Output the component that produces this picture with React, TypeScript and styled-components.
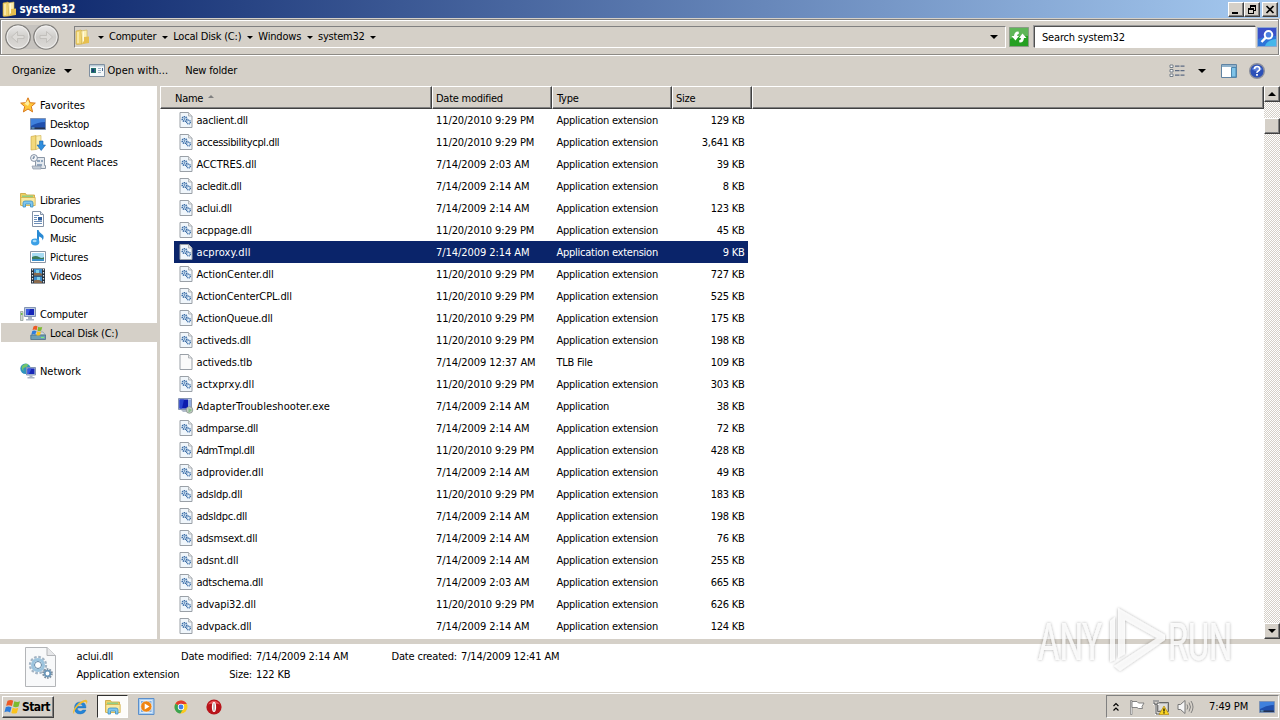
import React from "react";
import styled, { createGlobalStyle, css } from "styled-components";

const FACE = "#d5d0c8";
const UI = `"Tahoma", "DejaVu Sans Condensed", "DejaVu Sans", sans-serif`;

const Global = createGlobalStyle`
  * { box-sizing: border-box; }
  html, body { margin: 0; padding: 0; overflow: hidden; }
  body { font: 11px/16px ${UI}; letter-spacing: -0.25px; color: #000; background: ${FACE}; }
`;

const raised = css`
  background: ${FACE};
  border: 1px solid;
  border-color: #fff #404040 #404040 #fff;
  box-shadow: inset -1px -1px 0 #808080;
`;

const Screen = styled.div`
  position: relative;
  display: flex;
  flex-direction: column;
  width: 1280px;
  height: 720px;
  background: ${FACE};
  white-space: nowrap;
  cursor: default;
`;

const Text = styled.span<{ $track?: number; $drop?: number }>`
  padding-top: ${(p) => p.$drop ?? 0}px;
  letter-spacing: ${(p) => p.$track ?? -0.25}px;
`;

/* ---------- title bar ---------- */
const TitleBar = styled.header`
  display: flex;
  align-items: center;
  height: 18px;
  padding: 0 2px 0 2px;
  color: #fff;
  background: linear-gradient(90deg, #0a246a, #a6caf0);
`;
const Title = styled.h1`
  flex: 1;
  margin: 0 0 0 1.5px;
  font: bold 11.5px/18px ${UI};
  letter-spacing: -0.05px;
`;
const CaptionButtons = styled.div`
  display: flex;
`;
const CaptionButton = styled.button<{ $gap?: boolean }>`
  ${raised}
  display: grid;
  place-items: center;
  width: 16px;
  height: 15px;
  margin-left: ${(p) => (p.$gap ? 2 : 0)}px;
  padding: 0;
`;

/* ---------- address bar ---------- */
const NavBar = styled.div`
  display: flex;
  align-items: center;
  height: 36px;
  margin: 1px 1px 0 0;
  padding: 0 1px 0 4px;
  border: 1px solid #808080;
  border-bottom-color: #8d8a85;
  box-shadow: inset 1px 1px 0 #fff, 0 1px 0 #fff, 1px 0 0 #fff;
`;
const AddressBox = styled.div`
  display: flex;
  align-items: center;
  width: 932px;
  height: 22px;
  margin-left: 14px;
  border: 1px solid;
  border-color: #808080 #fff #fff #808080;
`;
const Crumb = styled.span`
  display: flex;
  align-items: center;
`;
const Arrow = styled.i<{ $m?: string; $s?: number }>`
  width: 0;
  height: 0;
  margin: ${(p) => p.$m ?? "0"};
  border: ${(p) => p.$s ?? 3}px solid transparent;
  border-top-color: #000;
  border-bottom: 0;
`;
const Spacer = styled.div`
  flex: 1;
`;
const SearchBox = styled.div`
  width: 222px;
  height: 22px;
  margin: 0 1px 0 5px;
  padding-left: 7px;
  line-height: 21px;
  letter-spacing: -0.18px;
  background: #fff;
  border: 1px solid;
  border-color: #505050 #e8e5df #fff #505050;
  box-shadow: -1px -1px 0 #999;
`;

/* ---------- command bar ---------- */
const CommandBar = styled.div`
  display: flex;
  align-items: center;
  height: 31px;
  padding: 0 15px 0 12px;
`;
const Command = styled.span<{ $left?: number; $gap?: number }>`
  display: flex;
  align-items: center;
  gap: ${(p) => p.$gap ?? 0}px;
  margin-left: ${(p) => p.$left ?? 0}px;
`;

/* ---------- body ---------- */
const Body = styled.main`
  display: flex;
  height: 553px;
`;
const Sidebar = styled.nav`
  width: 160px;
  padding-top: 9px;
  background: #fff;
  border-right: 3px solid ${FACE};
`;
const Group = styled.div`
  margin-bottom: 19px;
`;
const NavItem = styled.div<{ $root?: boolean; $on?: boolean }>`
  display: flex;
  align-items: center;
  gap: 4px;
  height: 19px;
  margin-left: 1px;
  padding-left: ${(p) => (p.$root ? 19 : 29)}px;
  background: ${(p) => (p.$on ? FACE : "none")};
`;
const Files = styled.section`
  flex: 1;
  background: #fff;
`;
const HeaderRow = styled.div`
  display: grid;
  grid-template-columns: 272px 120px 120px 80px 1fr;
  height: 23px;
`;
const HeaderCell = styled.div<{ $pad?: number }>`
  display: flex;
  align-items: center;
  padding-top: 2px;
  padding-left: ${(p) => p.$pad ?? 3}px;
  background: ${FACE};
  border: 1px solid;
  border-color: #fff #404040 #404040 #fff;
  box-shadow: inset -1px -1px 0 #808080;
`;
const SortArrow = styled.i`
  margin: -4px 0 0 5px;
  border: 3px solid transparent;
  border-top: 0;
  border-bottom-color: #808080;
`;
const FileRow = styled.div<{ $on?: boolean }>`
  display: grid;
  grid-template-columns: 262px 120.500px 112.500px 75.500px;
  align-items: center;
  width: 574px;
  height: 22px;
  margin-left: 14px;
  line-height: 16px;
  color: ${(p) => (p.$on ? "#fff" : "#000")};
  background: ${(p) => (p.$on ? "#0a246a" : "none")};
`;
const NameCell = styled.span`
  display: flex;
  align-items: center;
  gap: 2.500px;
  padding-left: 4px;
`;
const SizeCell = styled.span`
  padding-top: 2px;
  text-align: right;
`;
const ScrollBar = styled.div`
  display: flex;
  flex-direction: column;
  justify-content: space-between;
  width: 16px;
  background: repeating-conic-gradient(#d5d0c8 0 25%, #fff 0 50%) 0 0 / 2px 2px;
`;
const ScrollButton = styled.div<{ $flip?: boolean }>`
  ${raised}
  display: grid;
  place-items: center;
  height: 16px;
  ${Arrow} {
    transform: ${(p) => (p.$flip ? "rotate(180deg)" : "none")};
  }
`;
const ScrollThumb = styled.div`
  ${raised}
  height: 16px;
  margin-top: 16px;
`;

/* ---------- details pane ---------- */
const Details = styled.footer`
  display: flex;
  height: 53px;
  padding: 3px 0 0 25px;
  background: #fff;
  border-top: 5px solid ${FACE};
`;
const DetailGrid = styled.div`
  display: grid;
  grid-template-columns: 101px 74.500px 134.500px 70.500px auto;
  grid-auto-rows: 18px;
  margin-left: 20.500px;
  line-height: 19px;
  letter-spacing: -0.18px;
`;
const Right = styled.span`
  text-align: right;
`;
const Value = styled.span`
  padding-left: 4px;
  letter-spacing: -0.13px;
`;

/* ---------- taskbar ---------- */
const TaskBar = styled.div`
  display: flex;
  align-items: center;
  height: 28px;
  padding: 1px 1px 0 2px;
  background: ${FACE};
  box-shadow: inset 0 1px 0 ${FACE}, inset 0 2px 0 #fff;
`;
const StartButton = styled.button`
  ${raised}
  display: flex;
  align-items: center;
  gap: 1px;
  width: 52px;
  height: 22px;
  padding: 0 1px;
  color: #000;
  font: bold 12px/20px ${UI};
  letter-spacing: -0.6px;
`;
const TaskIcons = styled.div`
  display: flex;
  align-items: center;
  margin-left: 18px;
`;
const TaskSlot = styled.div<{ $w: number; $on?: boolean }>`
  display: grid;
  place-items: center;
  width: ${(p) => p.$w}px;
  height: 23px;
  ${(p) =>
    p.$on &&
    css`
      background: #fdfcfa;
      border: 1px solid;
      border-color: #303030 #fff #fff #303030;
    `}
`;
const Tray = styled.div`
  display: flex;
  align-items: center;
  width: 173px;
  height: 23px;
  padding: 0 3px 0 6px;
  border: 1px solid;
  border-color: #808080 #fff #fff #808080;
`;
const Clock = styled.time`
  margin: 0 11px 0 15px;
  padding-top: 1px;
  letter-spacing: -0.1px;
`;
const Watermark = styled.svg`
  position: absolute;
  left: 1028px;
  top: 600px;
  overflow: visible;
`;

/* ---------- icons ---------- */
type IconProps = { size?: number; w?: number; children: React.ReactNode; box?: string };
const Icon = ({ size = 16, w, children, box = "0 0 16 16" }: IconProps) => (
  <svg width={w ?? size} height={size} viewBox={box}>
    {children}
  </svg>
);

const Folder = () => (
  <Icon>
    <path d="M1 2l5-1 1 1v13l-5 .5L1 15z" fill="#f0d470" stroke="#c9a53c" strokeWidth=".6" />
    <path d="M6 2l6-1v12l-5 2z" fill="#fbeeb0" stroke="#cfae49" strokeWidth=".6" />
    <path d="M9 8l5-.5v6.500L7.500 15z" fill="#e6bf4e" />
    <path d="M3 3v11M8.500 2.500v10" stroke="#fff9dc" />
  </Icon>
);
const Star = () => (
  <Icon>
    <path d="M8 .8l2.100 4.900 5.200.4-4 3.500 1.300 5.300L8 12l-4.600 2.900 1.300-5.300-4-3.500 5.200-.4z" fill="#ffc73a" stroke="#d9791c" strokeWidth="1" />
    <path d="M8 3l1.300 3.500L8 9 4.500 6.800z" fill="#ffee9e" />
  </Icon>
);
const Desktop = () => (
  <Icon>
    <path d="M.5 2.500h15v11H.5z" fill="#1f4fae" stroke="#7d92b5" />
    <path d="M1 3h14v3Q8 6 1 10z" fill="#3f80dd" />
    <path d="M1 11.500h14V13H1z" fill="#27334d" />
    <path d="M1.500 11.500h3v1h-3z" fill="#77c0f5" />
  </Icon>
);
const Downloads = () => (
  <Icon>
    <path d="M1 1.500L6 .5v14l-5 .5z" fill="#f3d97c" stroke="#c9a53c" strokeWidth=".6" />
    <path d="M6 1l5-.5v12l-5 2z" fill="#fbeeb0" stroke="#cfae49" strokeWidth=".6" />
    <path d="M9.500 6h3.500v4h2.500L11.200 15.500 7 10h2.500z" fill="#2f8ede" stroke="#1a62aa" strokeWidth=".6" />
  </Icon>
);
const Recent = () => (
  <Icon>
    <path d="M5.500 3.500h9v8h1v3h-10z" fill="#e3e8ee" stroke="#8b97a6" />
    <path d="M7 6h3v2H7zM11 6h2v2h-2zM7 10h5v2H7z" fill="#8fa5bd" />
    <path d="M2 12h9v3H3z" fill="#c3ccd6" stroke="#8b97a6" strokeWidth=".7" />
    <circle cx="4" cy="4" r="3.400" fill="#f4f7fa" stroke="#8491a3" />
    <path d="M4 2v2.200H2.500" fill="none" stroke="#4d6684" />
  </Icon>
);
const Library = ({ size = 16 }: { size?: number }) => (
  <Icon size={size}>
    <path d="M.5 1.500h5l1 1.500h8v10H.5z" fill="#efcf62" stroke="#c8a137" strokeWidth=".8" />
    <path d="M2 3.500h11v4H2z" fill="#8fcf86" />
    <path d="M.8 5.500h14.400v8H.8z" fill="#fae99f" stroke="#d2ae48" strokeWidth=".8" />
    <path d="M3 15v-4q0-2 2-2h6q2 0 2 2v4h-2.500v-3h-5v3z" fill="#7fc6ee" stroke="#3b8fc4" strokeWidth=".8" />
  </Icon>
);
const DocIcon = () => (
  <Icon>
    <path d="M2.500.5h8l3 3v12h-11z" fill="#fff" stroke="#8492a6" />
    <path d="M10.500.5v3h3" fill="#dfe6ef" stroke="#8492a6" />
    <path d="M4 4.500h5M4 6.500h3M4 8.500h3M4 10.500h8M4 12.500h8" stroke="#6e8fb8" />
    <path d="M8 6h4v3.500H8z" fill="#2f5f9e" />
  </Icon>
);
const Music = () => (
  <Icon>
    <path d="M7 0h1.500q.5 2.500 3.500 4.300t.5 6.200q.3-3-3.500-4V12H7z" fill="#2a8ad4" />
    <ellipse cx="5.200" cy="12" rx="4.200" ry="3.400" fill="#3ba0e6" />
    <ellipse cx="4.600" cy="11" rx="2" ry="1.200" fill="#a7dbf8" />
  </Icon>
);
const Pictures = () => (
  <Icon>
    <path d="M.5 2.500h15v11H.5z" fill="#fff" stroke="#8b97a6" />
    <path d="M2 4h12v8H2z" fill="#a8dcf3" />
    <path d="M2 8q4-2 7 0t5 0v2H2z" fill="#3d7d5a" />
    <path d="M2 10h12v2H2z" fill="#3a8fc9" />
  </Icon>
);
const Videos = () => (
  <Icon>
    <path d="M1 .5h14v15H1z" fill="#25303c" />
    <path d="M4 1h8v6.500H4zM4 8.500h8V15H4z" fill="#3e8fd0" />
    <path d="M4 5q4-2 8 1v1.500H4zM4 12.500q4-2 8 1V15H4z" fill="#8a6a4d" />
    <path d="M6 2h3v3H6zM7 9h3v3H7z" fill="#7fd0e8" />
    <path d="M2.500 1v14M13.500 1v14" stroke="#dde6ee" strokeWidth="1.200" strokeDasharray="1.500 1.500" />
  </Icon>
);
const Computer = () => (
  <Icon>
    <path d="M.5 5.500h2.500v9H.5z" fill="#cfd8cf" stroke="#8c9a94" strokeWidth=".7" />
    <path d="M1 7h1.500v2H1z" fill="#6cbf4a" />
    <path d="M4.500 1.500h11v9h-11z" fill="#b9c8e0" stroke="#8394b3" />
    <path d="M6 3h8v6H6z" fill="#1626b8" />
    <path d="M6 3h4L8 9H6z" fill="#3958e0" />
    <path d="M8 11h4v2h2v1.500H6V13h2z" fill="#a9b4c4" />
  </Icon>
);
const Flag = () => (
  <>
    <path d="M3.500 1.500q2.500-1.300 4 0L6.600 5.200q-2-1.200-4.100-.2z" fill="#ee5a24" />
    <path d="M8.300 1.800q2.200 1 4 0l-1 3.700q-2 1-3.900 0z" fill="#7cbb2e" />
    <path d="M2.300 5.900q2-1 4 .2l-1 3.600q-2-1.200-4-.1z" fill="#2e7ddb" />
    <path d="M7.100 6.400q2 1 4 0l-1 3.600q-2 1-3.900 0z" fill="#fbc31c" />
  </>
);
const Disk = () => (
  <Icon>
    <path d="M2 10l2-3h9l2.500 3z" fill="#d5dde4" stroke="#7f8b98" strokeWidth=".6" />
    <path d="M.8 10h14.700v4.500H.8z" fill="#6f9fb4" stroke="#496f86" strokeWidth=".8" />
    <path d="M11 12h3v1h-3z" fill="#7af27a" />
    <Flag />
  </Icon>
);
const Network = () => (
  <Icon>
    <circle cx="5.500" cy="5.800" r="5.200" fill="#2f93bd" />
    <path d="M2 3q3-3 6-2 0 3-3 3.500T4 8Q1 7 2 3z" fill="#74c66a" />
    <path d="M6.500 4.500h9v7.500h-9z" fill="#b9c8e0" stroke="#8394b3" />
    <path d="M7.500 5.500h7V11h-7z" fill="#1626b8" />
    <path d="M7.500 5.500h4L9 11H7.500z" fill="#3958e0" />
    <path d="M9.500 12.500h3V14h2v1.500h-7V14h2z" fill="#a9b4c4" />
  </Icon>
);
const Page = ({ gears }: { gears?: boolean }) => (
  <Icon>
    <path d="M2 .500h8.500l3.500 3.500v11.500H2z" fill={gears ? "#f0f6fb" : "#fafafa"} stroke="#9aa0a7" />
    <path d="M10.500.5V4H14" fill="#e4e4e4" stroke="#a4a9af" strokeWidth=".8" />
    {gears && (
      <>
        <circle cx="6.500" cy="7" r="2.300" fill="#dcebf8" stroke="#3a6ca6" strokeWidth="1.600" strokeDasharray="1.200 .6" />
        <circle cx="6.500" cy="7" r=".8" fill="#3a6ca6" />
        <circle cx="10.500" cy="10" r="1.900" fill="#dcebf8" stroke="#3a6ca6" strokeWidth="1.300" strokeDasharray="1 .5" />
      </>
    )}
  </Icon>
);
const ExeIcon = () => (
  <Icon>
    <path d="M.5.500h13v11H.5z" fill="#c3cde2" stroke="#8795b3" />
    <path d="M1.500 1.500h8.500v9H1.500z" fill="#0c1cae" />
    <path d="M1.500 1.500h4.500L4 10.500H1.500z" fill="#2743cf" />
    <path d="M10 2h3v8.500h-3z" fill="#8fa9dd" />
    <path d="M3 12h6v2H5z" fill="#b3bccb" />
    <circle cx="11.500" cy="12" r="3.300" fill="#c3cbc6" stroke="#8a978e" strokeWidth=".8" />
    <path d="M10.500 10l3.500 2-3.500 3z" fill="#8cc08c" />
  </Icon>
);
const FlagLogo = () => (
  <Icon size={17} box="1 0 12 11">
    <Flag />
  </Icon>
);

const BigDll = () => (
  <Icon w={31} size={40} box="0 0 31 40">
    <path d="M.5.500H22l8.500 8V39.500H.5z" fill="#f8f9fa" stroke="#b3b5b8" />
    <path d="M22 .5v8h8.500" fill="#e6e7e9" stroke="#b3b5b8" />
    <circle cx="13" cy="18" r="8" fill="none" stroke="#a3b4c4" strokeWidth="2.300" strokeDasharray="2.600 1.590" />
    <circle cx="13" cy="18" r="5.500" fill="#f3f8fb" stroke="#9cc4de" strokeWidth="3" />
    <circle cx="13" cy="18" r="3.500" fill="#fff" stroke="#5e86a6" />
    <circle cx="22.500" cy="26.500" r="4.300" fill="none" stroke="#7d8fa0" strokeWidth="2" strokeDasharray="1.700 1" />
    <circle cx="22.500" cy="26.500" r="2.800" fill="#fff" stroke="#6a96b8" strokeWidth="1.800" />
  </Icon>
);

const NavCircles = () => (
  <svg width="55" height="28" viewBox="0 0 55 28">
    <defs>
      <linearGradient id="btn" x1="0" y1="0" x2="0" y2="1">
        <stop offset="0" stopColor="#ecebea" />
        <stop offset=".5" stopColor="#cfcdca" />
        <stop offset="1" stopColor="#dedcd9" />
      </linearGradient>
    </defs>
    <path d="M13 2h28v24H13z" fill="#c6c3bf" />
    {[13, 41].map((x) => (
      <g key={x}>
        <circle cx={x} cy="14" r="12.200" fill="url(#btn)" stroke="#83817e" strokeWidth="1.300" />
        <circle cx={x} cy="14" r="11" fill="none" stroke="#f3f2f0" strokeWidth=".9" />
      </g>
    ))}
    <path d="M6.500 14l6-5.500v4h6.500v3h-6.500v4z" fill="#dddbd8" stroke="#bcbab6" strokeWidth=".8" />
    <path d="M47.500 14l-6-5.500v4H35v3h6.500v4z" fill="#dddbd8" stroke="#bcbab6" strokeWidth=".8" />
  </svg>
);
const Refresh = () => (
  <Icon size={20} box="0 0 20 20">
    <path d="M.5.500h19v19H.5z" fill="#25a022" stroke="#8a9c86" />
    <path d="M1 1h18v8Q10 8 1 12z" fill="#5fb658" />
    <path d="M9.500 4.500Q5.500 4 5 9H2.500L6.500 13.500 10 9H8q0-2 2-2.500z" fill="#fff" />
    <path d="M10.500 15.500q4 .5 4.500-4.500h2.500L13.500 6.500 10 11h2q0 2-2 2.500z" fill="#fff" />
  </Icon>
);
const SearchButton = () => (
  <Icon size={20} box="0 0 20 20">
    <path d="M.5.500h19v19H.5z" fill="#2f74d8" stroke="#8ea7cf" />
    <path d="M1 1h18v8Q10 8 1 12z" fill="#3a50c8" />
    <path d="M8 19q2-6 11-7v7z" fill="#46b6ea" />
    <circle cx="11.500" cy="7.800" r="3.800" fill="#4a7fe0" stroke="#fff" strokeWidth="2" />
    <path d="M8.800 10.600L4.500 15" stroke="#fff" strokeWidth="2.400" />
  </Icon>
);
const OpenWith = () => (
  <Icon w={16} size={14} box="0 0 16 14">
    <path d="M.5.500h15v12H.5z" fill="#f4f8fa" stroke="#7f8fa0" />
    <path d="M1 1h14v1.500H1z" fill="#b9cad6" />
    <path d="M2 4h5v5H2z" fill="#23706c" />
    <path d="M3 5h2v3H3z" fill="#1b3d78" />
    <path d="M9 4.500h3M9 6.500h3M9 8.500h3" stroke="#9fb4c6" />
    <path d="M13.500 4v3" stroke="#4d6c95" />
  </Icon>
);
const Views = () => (
  <Icon w={16} size={14} box="0 0 16 14">
    {[1, 5.5, 10].map((y) => (
      <g key={y}>
        <path d={`M1 ${y}h3v2.500h-3z`} fill="#fff" stroke="#68737f" strokeWidth=".9" />
        <path d={`M6 ${y + 1.2}h4.500M11.500 ${y + 1.2}h4`} stroke="#5d6b83" strokeWidth="1.200" />
      </g>
    ))}
  </Icon>
);
const Preview = () => (
  <Icon w={16} size={14} box="0 0 16 14">
    <path d="M.5.500h15v13H.5z" fill="#fff" stroke="#5f83a3" />
    <path d="M1 1h14v2H1z" fill="#8fb2cc" />
    <path d="M10.500 3.500h4.500v9.500h-4.500z" fill="#7fc3e8" stroke="#4b87b0" />
  </Icon>
);
const Help = () => (
  <Icon>
    <circle cx="8" cy="8" r="7.300" fill="#2c50b8" stroke="#8b8f9c" strokeWidth="1.400" />
    <path d="M2.500 6Q8 1 13.500 6 11 8 8 8T2.500 6z" fill="#5f83dc" />
    <path d="M5.500 6q0-2.500 2.600-2.500T10.700 6q0 1.300-1.400 2T8 9.800" fill="none" stroke="#fff" strokeWidth="1.700" />
    <path d="M7.100 11h1.800v1.800H7.100z" fill="#fff" />
  </Icon>
);
const IE = () => (
  <Icon>
    <path d="M14 9H5.300q.2 3.300 3 3.300 1.700 0 2.300-1.300H14Q12.500 15 8.300 15 2.500 15 2.500 9q0-6 5.800-6T14 9zM5.400 7.300h5.400Q10.400 5 8 5T5.400 7.300z" fill="#2385d8" stroke="#1767b3" strokeWidth=".4" />
    <path d="M2.500 15.200Q-1 13 4 7T14 .8q2.500.7.500 4.700.3-3.300-2.500-2.500Q7 5 4 9.500t-1.500 5.700z" fill="#f2bd2e" />
  </Icon>
);
const Player = () => (
  <Icon size={17} box="0 0 17 17">
    <path d="M.5.500h15.500v16H.5z" fill="#a9cdf0" stroke="#5b8fcb" />
    <path d="M2.500 2.500h11.500v12H2.500z" fill="#7fb0e4" stroke="#dbeafa" />
    <circle cx="8.300" cy="8.500" r="5.600" fill="#ef8411" stroke="#fff" strokeWidth=".6" />
    <path d="M6.700 5.500l4.800 3-4.800 3z" fill="#fff" />
  </Icon>
);
const Chrome = () => (
  <Icon>
    <circle cx="8" cy="8" r="6.500" fill="#fbc91e" />
    <path d="M8 8L2.400 4.700A6.500 6.500 0 0 1 13.800 5H8z" fill="#e23a2e" />
    <path d="M8 8L2.400 4.700A6.500 6.500 0 0 0 7.300 14.500L10.500 9.500z" fill="#3aa351" />
    <circle cx="8" cy="8" r="3.200" fill="#fff" />
    <circle cx="8" cy="8" r="2.400" fill="#3f7fe8" />
  </Icon>
);
const Opera = () => (
  <Icon>
    <circle cx="8" cy="8" r="7.600" fill="#b8141a" />
    <path d="M2 5.500Q8-2 14 5.500 8 3.500 2 5.500z" fill="#e8575a" />
    <ellipse cx="8" cy="8" rx="2.100" ry="5" fill="#fff" />
    <ellipse cx="8" cy="8" rx=".8" ry="4" fill="#b9a3a3" />
  </Icon>
);
const TrayArrows = () => (
  <Icon w={6} size={10} box="0 0 6 10">
    <path d="M.5 4L3 1.500 5.500 4M.5 8.500L3 6l2.500 2.500" fill="none" stroke="#000" strokeWidth="1.200" />
  </Icon>
);
const TrayFlag = () => (
  <Icon>
    <path d="M1.500 1.500H3v14H1.500z" fill="#fff" stroke="#777" strokeWidth=".7" />
    <path d="M3 2.500h5L9.500 4H15l-2 3.500.5 2H9.500L8 8.500H3z" fill="#fff" stroke="#777" strokeWidth=".9" />
  </Icon>
);
const TrayNet = () => (
  <Icon>
    <path d="M4.500 3.500h11v9h-11z" fill="#b6b6b6" stroke="#666" />
    <path d="M6 5h8v6H6z" fill="#dcdcdc" />
    <path d="M1 1v4h4V1M3 1v2M3 5v10h4" fill="none" stroke="#fff" strokeWidth="2.200" />
    <path d="M1 1v4h4V1M3 1v2M3 5v10h4" fill="none" stroke="#444" strokeWidth="1" />
    <path d="M11 7l5 8.500H6z" fill="#f9d423" stroke="#b48a10" strokeWidth=".7" />
    <path d="M11 9.500v3M11 13.300v1.200" stroke="#000" strokeWidth="1.200" />
  </Icon>
);
const TraySound = () => (
  <Icon w={17} size={16} box="0 0 17 16">
    <path d="M1 5.500h2.500L8 1.500v13l-4.500-4H1z" fill="#f6f6f6" stroke="#777" />
    <path d="M10 5.500q1.700 2.500 0 5M12 3.500q3 4.500 0 9M14 2q4 6 0 12" fill="none" stroke="#777" strokeWidth=".9" />
  </Icon>
);

/* ---------- data ---------- */
const OLD = "7/14/2009 2:14 AM";
const NEW = "11/20/2010 9:29 PM";
const EARLY = "7/14/2009 2:03 AM";
/* name, modified, size in KB, letter tracking */
const files: [string, string, string, number][] = [
  ["aaclient.dll", NEW, "129", -0.25],
  ["accessibilitycpl.dll", NEW, "3,641", -0.35],
  ["ACCTRES.dll", EARLY, "39", -0.07],
  ["acledit.dll", OLD, "8", -0.3],
  ["aclui.dll", OLD, "123", -0.35],
  ["acppage.dll", NEW, "45", -0.2],
  ["acproxy.dll", OLD, "9", 0.15],
  ["ActionCenter.dll", NEW, "727", -0.06],
  ["ActionCenterCPL.dll", NEW, "525", -0.12],
  ["ActionQueue.dll", NEW, "175", -0.15],
  ["activeds.dll", NEW, "198", -0.17],
  ["activeds.tlb", "7/14/2009 12:37 AM", "109", -0.17],
  ["actxprxy.dll", NEW, "303", 0.12],
  ["AdapterTroubleshooter.exe", OLD, "38", 0.05],
  ["admparse.dll", OLD, "72", -0.25],
  ["AdmTmpl.dll", NEW, "428", -0.38],
  ["adprovider.dll", OLD, "49", -0.04],
  ["adsldp.dll", NEW, "183", -0.2],
  ["adsldpc.dll", OLD, "198", -0.25],
  ["adsmsext.dll", OLD, "76", -0.17],
  ["adsnt.dll", OLD, "255", -0.08],
  ["adtschema.dll", EARLY, "665", -0.25],
  ["advapi32.dll", NEW, "626", -0.13],
  ["advpack.dll", OLD, "124", -0.16],
];
const kindOf = (name: string) =>
  name.endsWith(".exe") ? "Application" : name.endsWith(".tlb") ? "TLB File" : "Application extension";
const iconOf = (name: string) =>
  name.endsWith(".exe") ? <ExeIcon /> : <Page gears={name.endsWith(".dll")} />;

type Entry = [string, React.ReactNode, number?];
const groups: { root: Entry; items: Entry[] }[] = [
  { root: ["Favorites", <Star />, 0.05], items: [["Desktop", <Desktop />, -0.25], ["Downloads", <Downloads />, -0.25], ["Recent Places", <Recent />, -0.08]] },
  { root: ["Libraries", <Library />, -0.3], items: [["Documents", <DocIcon />, -0.3], ["Music", <Music />, -0.4], ["Pictures", <Pictures />, -0.1], ["Videos", <Videos />, -0.25]] },
  { root: ["Computer", <Computer />], items: [["Local Disk (C:)", <Disk />, -0.2]] },
  { root: ["Network", <Network />, -0.05], items: [] },
];

export default function App() {
  return (
    <Screen>
      <Global />
      <TitleBar>
        <Folder />
        <Title>system32</Title>
        <CaptionButtons>
          <CaptionButton>
            <Icon w={10} size={9} box="0 0 10 9"><path d="M1 7h6v2H1z" /></Icon>
          </CaptionButton>
          <CaptionButton>
            <Icon w={10} size={9} box="0 0 10 9">
              <path d="M3 0h6v2H3zM8 2h1v4H7V5h1zM3 2h1v1H3zM1 3h6v2H1zM1 5h1v4H1zM6 5h1v4H6zM2 8h4v1H2z" />
            </Icon>
          </CaptionButton>
          <CaptionButton $gap>
            <Icon w={10} size={9} box="0 0 10 9"><path d="M1.500 1l7 7M8.500 1l-7 7" stroke="#000" strokeWidth="1.700" /></Icon>
          </CaptionButton>
        </CaptionButtons>
      </TitleBar>

      <NavBar>
        <NavCircles />
        <AddressBox>
          <Folder />
          <Arrow $m="0 5px 0 7px" />
          <Crumb><Text>Computer</Text><Arrow $m="0 5px 0 6px" /></Crumb>
          <Crumb><Text $track={-0.2}>Local Disk (C:)</Text><Arrow $m="0 5px 0 6px" /></Crumb>
          <Crumb><Text $track={-0.2}>Windows</Text><Arrow $m="0 5px 0 6px" /></Crumb>
          <Crumb><Text>system32</Text><Arrow $m="0 5px 0 6px" /></Crumb>
          <Spacer />
          <Arrow $s={4} $m="0 7px 0 0" />
        </AddressBox>
        <Spacer />
        <Refresh />
        <SearchBox>Search system32</SearchBox>
        <SearchButton />
      </NavBar>

      <CommandBar>
        <Command><Text $track={-0.1}>Organize</Text><Arrow $s={4} $m="0 0 0 8px" /></Command>
        <Command $left={17} $gap={3}><OpenWith /><Text $track={0.05}>Open with...</Text></Command>
        <Command $left={17}><Text $track={-0.15}>New folder</Text></Command>
        <Spacer />
        <Views />
        <Arrow $s={4} $m="0 15px 0 13px" />
        <Preview />
        <Command $left={12}><Help /></Command>
      </CommandBar>

      <Body>
        <Sidebar>
          {groups.map((g) => (
            <Group key={g.root[0]}>
              <NavItem $root>{g.root[1]}<Text $drop={2} $track={g.root[2]}>{g.root[0]}</Text></NavItem>
              {g.items.map(([name, icon, track]) => (
                <NavItem key={name} $on={name.startsWith("Local")}>{icon}<Text $drop={2} $track={track}>{name}</Text></NavItem>
              ))}
            </Group>
          ))}
        </Sidebar>
        <Files>
          <HeaderRow>
            <HeaderCell $pad={14}>Name<SortArrow /></HeaderCell>
            <HeaderCell>Date modified</HeaderCell>
            <HeaderCell $pad={4}>Type</HeaderCell>
            <HeaderCell>Size</HeaderCell>
            <HeaderCell />
          </HeaderRow>
          {files.map(([name, date, size, track]) => (
            <FileRow key={name} $on={name === "acproxy.dll"}>
              <NameCell>{iconOf(name)}<Text $drop={2} $track={track}>{name}</Text></NameCell>
              <Text $drop={2} $track={date === NEW ? -0.1 : -0.07}>{date}</Text>
              <Text $drop={2}>{kindOf(name)}</Text>
              <SizeCell>{size} KB</SizeCell>
            </FileRow>
          ))}
        </Files>
        <ScrollBar>
          <div>
            <ScrollButton $flip><Arrow $s={4} /></ScrollButton>
            <ScrollThumb />
          </div>
          <ScrollButton><Arrow $s={4} /></ScrollButton>
        </ScrollBar>
      </Body>

      <Details>
        <BigDll />
        <DetailGrid>
          <span>aclui.dll</span>
          <Right>Date modified:</Right>
          <Value>{OLD}</Value>
          <Right>Date created:</Right>
          <Value>7/14/2009 12:41 AM</Value>
          <span>Application extension</span>
          <Right>Size:</Right>
          <Value>122 KB</Value>
        </DetailGrid>
      </Details>

      <TaskBar>
        <StartButton><FlagLogo />Start</StartButton>
        <TaskIcons>
          <TaskSlot $w={16}><IE /></TaskSlot>
          <TaskSlot $w={9} />
          <TaskSlot $w={31} $on><Library /></TaskSlot>
          <TaskSlot $w={37}><Player /></TaskSlot>
          <TaskSlot $w={31}><Chrome /></TaskSlot>
          <TaskSlot $w={36}><Opera /></TaskSlot>
        </TaskIcons>
        <Spacer />
        <Tray>
          <TrayArrows />
          <Command $left={10}><TrayFlag /></Command>
          <Command $left={8}><TrayNet /></Command>
          <Command $left={8}><TraySound /></Command>
          <Clock>7:49 PM</Clock>
          <Desktop />
        </Tray>
      </TaskBar>

      <Watermark width="240" height="84" viewBox="0 0 240 84">
        <defs>
          <filter id="soft" x="-10%" y="-10%" width="120%" height="120%">
            <feDropShadow dx="0" dy="0" stdDeviation="1.800" floodColor="#000" floodOpacity=".42" />
          </filter>
        </defs>
        <g filter="url(#soft)" fill="#fff" fillOpacity=".8" fontFamily="Roboto, sans-serif" fontSize="52">
          <text x="10" y="59.500" textLength="64" lengthAdjust="spacingAndGlyphs">ANY</text>
          <text x="140" y="59.500" textLength="64" lengthAdjust="spacingAndGlyphs">RUN</text>
          <path d="M82 62V21l5-4v43z" />
          <path fillRule="evenodd" d="M90 8L137 35v5L92 71l-6-5 43-28L97 20v34l-7 4z" />
        </g>
      </Watermark>
    </Screen>
  );
}
